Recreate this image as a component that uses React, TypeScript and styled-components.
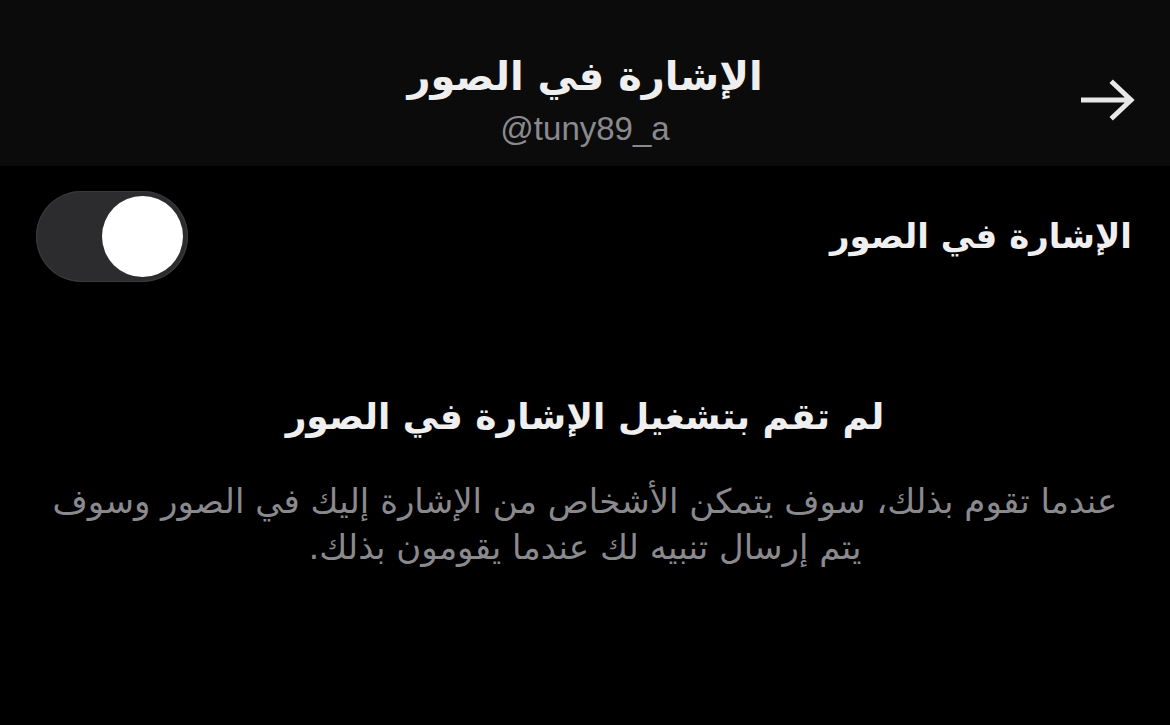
import * as React from 'react';
import styled, { createGlobalStyle } from 'styled-components';

const GlobalStyle = createGlobalStyle`
  html, body {
    margin: 0;
    padding: 0;
    background: #000;
  }
  body {
    font-family: 'DejaVu Sans', 'Noto Sans', sans-serif;
  }
`;

const Page = styled.div`
  width: 1170px;
  height: 725px;
  background: #000;
  color: #f2f2f2;
  direction: rtl;
  overflow: hidden;
`;

const Header = styled.header`
  position: relative;
  height: 166px;
  background: #0b0b0b;
  display: flex;
  flex-direction: column;
  align-items: center;
  padding-top: 48px;
  box-sizing: border-box;
`;

const Title = styled.h1`
  margin: 0;
  font-size: 40px;
  font-weight: 700;
  line-height: 56px;
  color: #efefef;
`;

const Handle = styled.div`
  direction: ltr;
  margin-top: 6px;
  font-family: 'Liberation Sans', Arial, sans-serif;
  font-size: 33px;
  line-height: 38px;
  color: #8a8a8e;
`;

const BackButton = styled.button`
  position: absolute;
  right: 34px;
  top: 78px;
  width: 56px;
  height: 46px;
  padding: 0;
  border: 0;
  background: none;
  color: #e8e8e8;
  display: flex;
  align-items: center;
  justify-content: center;
`;

const SettingRow = styled.div`
  display: flex;
  align-items: center;
  justify-content: space-between;
  padding: 24px 38px 0 36px;
  height: 92px;
`;

const Label = styled.span`
  font-size: 34px;
  font-weight: 700;
  color: #efefef;
`;

const Track = styled.div<{ $on: boolean }>`
  width: 152px;
  height: 91px;
  border-radius: 46px;
  background: #2c2c2e;
  box-shadow: inset 0 0 0 1px #3a3a3c;
  display: flex;
  align-items: center;
  justify-content: ${p => (p.$on ? 'flex-start' : 'flex-end')};
  padding: 0 5px;
  box-sizing: border-box;
`;

const Knob = styled.div`
  width: 81px;
  height: 81px;
  border-radius: 50%;
  background: #fff;
`;

const Empty = styled.section`
  display: flex;
  flex-direction: column;
  align-items: center;
  padding: 110px 20px 0;
  text-align: center;
`;

const EmptyTitle = styled.h2`
  margin: 0;
  font-size: 36px;
  font-weight: 700;
  line-height: 50px;
  color: #efefef;
`;

const EmptyText = styled.p`
  margin: 36px 0 0;
  font-size: 34px;
  line-height: 46px;
  color: #8a8a8e;
`;

const ArrowIcon = () => (
  <svg width="54" height="44" viewBox="0 0 54 44" fill="none">
    <path
      d="M2 21H49M32 4L50 21L32 38"
      stroke="currentColor"
      strokeWidth="5"
      strokeLinecap="square"
    />
  </svg>
);

export default function App() {
  const [enabled, setEnabled] = React.useState(false);
  return (
    <Page>
      <GlobalStyle />
      <Header>
        <Title>الإشارة في الصور</Title>
        <Handle>@tuny89_a</Handle>
        <BackButton aria-label="رجوع">
          <ArrowIcon />
        </BackButton>
      </Header>
      <SettingRow>
        <Label>الإشارة في الصور</Label>
        <Track $on={!enabled} onClick={() => setEnabled(!enabled)}>
          <Knob />
        </Track>
      </SettingRow>
      <Empty>
        <EmptyTitle>لم تقم بتشغيل الإشارة في الصور</EmptyTitle>
        <EmptyText>
          عندما تقوم بذلك، سوف يتمكن الأشخاص من الإشارة إليك في الصور وسوف
          <br />
          يتم إرسال تنبيه لك عندما يقومون بذلك.
        </EmptyText>
      </Empty>
    </Page>
  );
}
